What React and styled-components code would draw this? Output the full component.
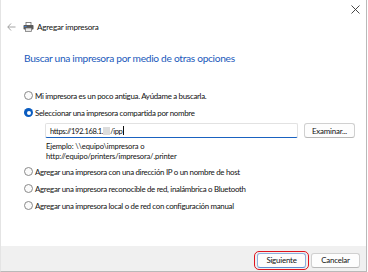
import React from "react";
import styled, { createGlobalStyle } from "styled-components";

const Global = createGlobalStyle`
  html, body { margin: 0; padding: 0; background: #ffffff; }
  body { font-family: Lato, "Noto Sans", sans-serif; }
  * { box-sizing: border-box; }
`;

const Window = styled.div`
  width: 367px;
  height: 272px;
  background: #ffffff;
  border-right: 1px solid #b9b9b9;
  border-bottom: 1px solid #b9b9b9;
  border-left: 1px solid #e4e4e4;
  display: flex;
  flex-direction: column;
  color: #111111;
`;

const TitleBar = styled.div`
  height: 18px;
  display: flex;
  justify-content: flex-end;
  align-items: center;
  padding: 0 5px 0 0;
`;

const CloseButton = styled.div`
  width: 12px;
  height: 12px;
  display: flex;
  align-items: center;
  justify-content: center;
`;

const NavRow = styled.div`
  display: flex;
  align-items: center;
  height: 18px;
  padding-left: 4px;
`;

const BackArrow = styled.div`
  width: 12px;
  display: flex;
  align-items: center;
  justify-content: center;
  margin-right: 6px;
`;

const NavTitle = styled.span`
  font-size: 8.1px;
  letter-spacing: -0.2px;
  color: #111111;
  margin-left: 3px;
`;

const Content = styled.div`
  flex: 1;
  padding: 14px 0 0 23px;
  display: flex;
  flex-direction: column;
`;

const Heading = styled.div`
  font-size: 10.2px;
  letter-spacing: -0.3px;
  color: #1a59bb;
  height: 16px;
  line-height: 16px;
  margin-bottom: 21px;
`;

const Options = styled.div`
  display: flex;
  flex-direction: column;
`;

const OptionRow = styled.div`
  display: flex;
  align-items: center;
  height: 17px;
  font-size: 7.9px;
  letter-spacing: -0.3px;
  color: #111111;
  gap: 2px;
`;

const Radio = styled.span`
  width: 9px;
  height: 9px;
  border-radius: 50%;
  flex: none;
  border: ${(p) => (p.$checked ? "none" : "1px solid #8a8a8a")};
  background: ${(p) => (p.$checked ? "#0a5cc0" : "#fbfbfb")};
  display: flex;
  align-items: center;
  justify-content: center;
  &::after {
    content: "";
    display: ${(p) => (p.$checked ? "block" : "none")};
    width: 4px;
    height: 4px;
    border-radius: 50%;
    background: #ffffff;
  }
`;

const SubBlock = styled.div`
  padding-left: 21px;
  display: flex;
  flex-direction: column;
`;

const InputRow = styled.div`
  display: flex;
  align-items: center;
  gap: 6px;
  height: 17px;
  margin-top: 1px;
`;

const TextInput = styled.div`
  width: 253px;
  height: 15px;
  border: 1px solid #e2e2e2;
  border-bottom: 1.5px solid #1a62c0;
  border-radius: 2px;
  display: flex;
  align-items: center;
  padding-left: 4px;
  font-size: 7.6px;
  letter-spacing: -0.4px;
  color: #111111;
`;

const Blur = styled.span`
  display: inline-block;
  width: 7px;
  height: 8px;
  background: #dcdcdc;
`;

const Caret = styled.span`
  display: inline-block;
  width: 1px;
  height: 9px;
  background: #111111;
  margin-left: 1px;
`;

const Button = styled.div`
  height: 15px;
  width: ${(p) => p.$w || 50}px;
  border: 1px solid ${(p) => (p.$primary ? "#8fb0dc" : "#d0d0d0")};
  border-bottom-color: ${(p) => (p.$primary ? "#5d8ccf" : "#b8b8b8")};
  border-radius: 3px;
  background: #fdfdfd;
  display: flex;
  align-items: center;
  justify-content: center;
  font-size: 7.9px;
  letter-spacing: -0.2px;
  color: #111111;
`;

const Example = styled.div`
  font-size: 7.6px;
  letter-spacing: -0.15px;
  line-height: 10px;
  color: #111111;
  padding: 2px 0 2px 1px;
`;

const Footer = styled.div`
  height: 25px;
  background: #f0f0f0;
  display: flex;
  justify-content: flex-end;
  align-items: center;
  padding-right: 6px;
  gap: 2px;
`;

const Highlight = styled.div`
  border: 1.5px solid #e0141e;
  border-radius: 5px;
  padding: 1px 2px;
  margin-top: 3px;
`;

const CancelWrap = styled.div`
  margin-top: 3px;
`;

const options = [
  "Mi impresora es un poco antigua. Ayúdame a buscarla.",
  "Seleccionar una impresora compartida por nombre",
];
const more = [
  "Agregar una impresora con una dirección IP o un nombre de host",
  "Agregar una impresora reconocible de red, inalámbrica o Bluetooth",
  "Agregar una impresora local o de red con configuración manual",
];

function PrinterIcon() {
  return (
    <svg width="11" height="10" viewBox="0 0 11 10">
      <rect x="3" y="0.5" width="5" height="3" fill="#ffffff" stroke="#6b6b6b" strokeWidth="0.8" />
      <rect x="0.5" y="3" width="10" height="4.5" rx="0.8" fill="#5a5a5a" />
      <rect x="2.5" y="6" width="6" height="3.5" fill="#e8e8e8" stroke="#6b6b6b" strokeWidth="0.7" />
      <rect x="1.5" y="4" width="2" height="1" fill="#3b7ed6" />
    </svg>
  );
}

export default function App() {
  return (
    <>
      <Global />
      <Window>
        <TitleBar>
          <CloseButton>
            <svg width="9" height="9" viewBox="0 0 9 9">
              <path d="M0.5 0.5 L8.5 8.5 M8.5 0.5 L0.5 8.5" stroke="#333" strokeWidth="0.9" />
            </svg>
          </CloseButton>
        </TitleBar>
        <NavRow>
          <BackArrow>
            <svg width="9" height="8" viewBox="0 0 9 8">
              <path d="M4 0.5 L0.8 4 L4 7.5 M0.8 4 H8.5" stroke="#9a9a9a" strokeWidth="0.9" fill="none" />
            </svg>
          </BackArrow>
          <PrinterIcon />
          <NavTitle>Agregar impresora</NavTitle>
        </NavRow>
        <Content>
          <Heading>Buscar una impresora por medio de otras opciones</Heading>
          <Options>
            <OptionRow>
              <Radio />
              {options[0]}
            </OptionRow>
            <OptionRow>
              <Radio $checked />
              {options[1]}
            </OptionRow>
            <SubBlock>
              <InputRow>
                <TextInput>
                  https://192.168.1.<Blur />/ipp<Caret />
                </TextInput>
                <Button $w={51}>Examinar...</Button>
              </InputRow>
              <Example>
                Ejemplo: \\equipo\impresora o
                <br />
                http://equipo/printers/impresora/.printer
              </Example>
            </SubBlock>
            {more.map((t) => (
              <OptionRow key={t}>
                <Radio />
                {t}
              </OptionRow>
            ))}
          </Options>
        </Content>
        <Footer>
          <Highlight>
            <Button $w={49} $primary>
              Siguiente
            </Button>
          </Highlight>
          <CancelWrap>
            <Button $w={49}>Cancelar</Button>
          </CancelWrap>
        </Footer>
      </Window>
    </>
  );
}
